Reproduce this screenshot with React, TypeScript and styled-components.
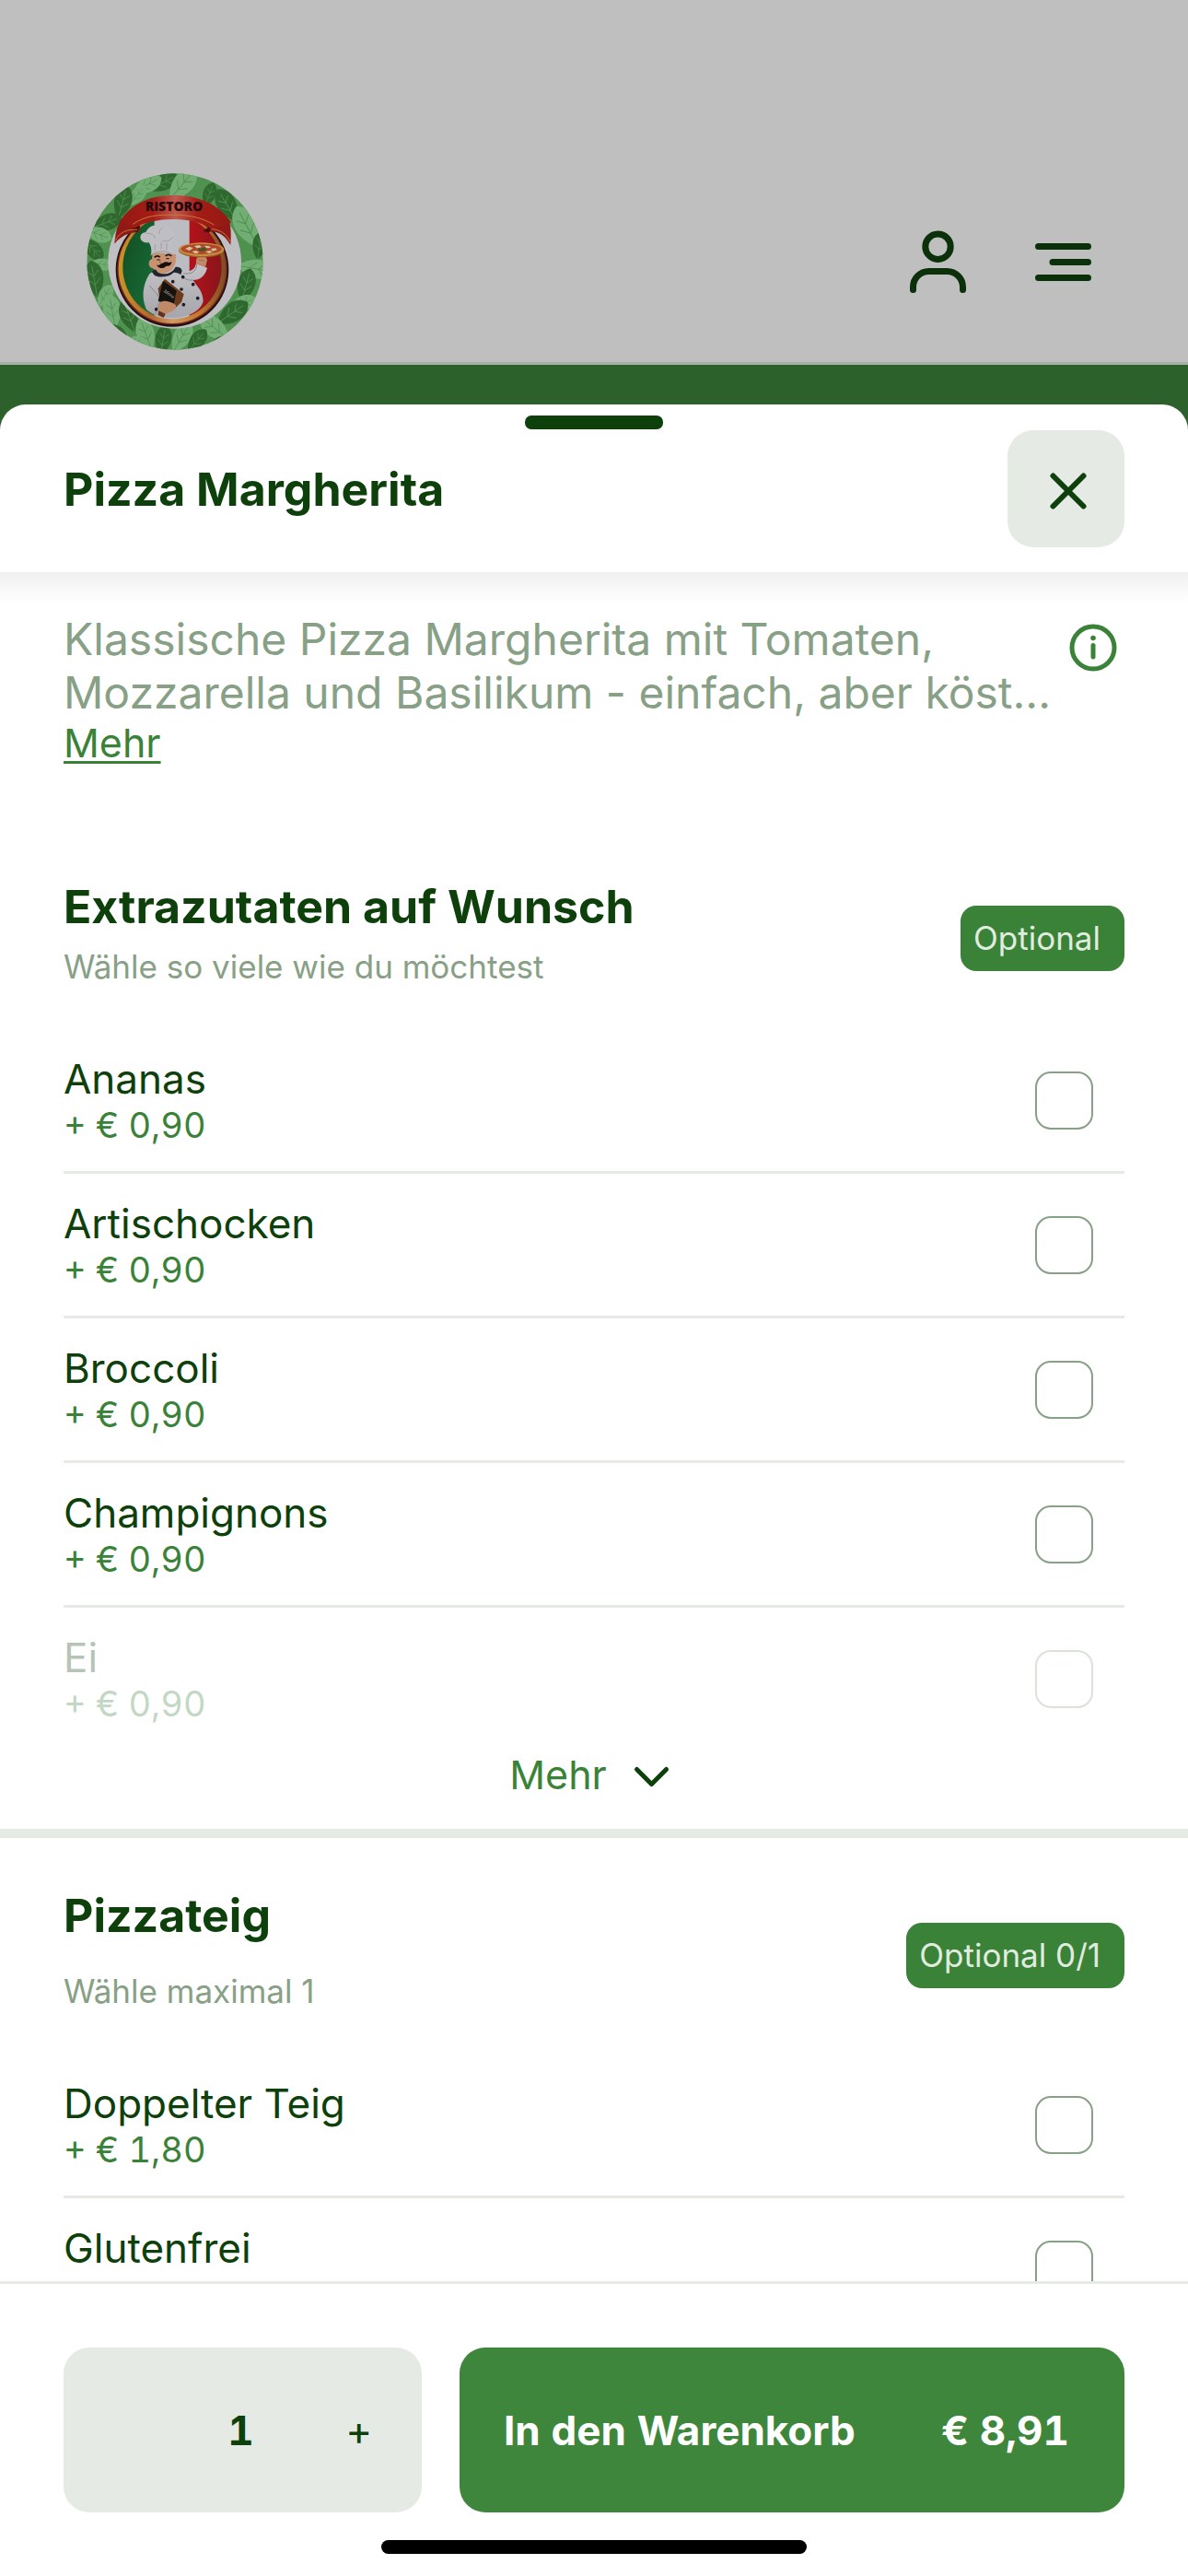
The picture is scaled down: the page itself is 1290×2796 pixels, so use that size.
import React, { useState } from "react";
import styled, { createGlobalStyle } from "styled-components";

const color = {
  ink: "#0d400b",
  green: "#3b8239",
  button: "#3e863c",
  muted: "#87a086",
  pale: "#e5ebe4",
};

const GlobalStyle = createGlobalStyle`
  *, *::before, *::after { box-sizing: border-box; }
  body {
    margin: 0;
    background: #ffffff;
    color: ${color.ink};
    font-family: Inter, "Liberation Sans", sans-serif;
  }
  button, input { font: inherit; color: inherit; }
  h1, h2, p, ul { margin: 0; padding: 0; }
`;

const Page = styled.div`
  display: flex;
  flex-direction: column;
  height: 100vh;
  background: #2c612b;
`;

const ShopHeader = styled.header`
  display: flex;
  align-items: center;
  justify-content: space-between;
  padding: 188px 100px 13px 94px;
  background: #bfbfbf;
  border-bottom: 3px solid #a9afa9;
`;

const HeaderActions = styled.nav`
  display: flex;
  gap: 64px;
`;

const IconButton = styled.button`
  display: flex;
  padding: 0;
  border: 0;
  background: none;
  color: #0a310a;
  cursor: pointer;
`;

const Sheet = styled.main`
  display: flex;
  flex: 1;
  flex-direction: column;
  min-height: 0;
  margin-top: 43px;
  border-radius: 28px 28px 0 0;
  background: #ffffff;
  overflow: hidden;
`;

const Handle = styled.div`
  align-self: center;
  flex: none;
  width: 150px;
  height: 15px;
  margin-top: 12px;
  border-radius: 7px;
  background: ${color.ink};
`;

const SheetHeader = styled.div`
  display: flex;
  align-items: center;
  justify-content: space-between;
  padding: 1px 69px 27px;
`;

const Title = styled.h1`
  font-size: 50px;
  line-height: 60px;
  font-weight: 700;
`;

const CloseButton = styled.button`
  display: flex;
  align-items: center;
  justify-content: center;
  width: 127px;
  height: 127px;
  padding: 0;
  border: 0;
  border-radius: 28px;
  background: ${color.pale};
  cursor: pointer;
`;

const ScrollArea = styled.div`
  flex: 1;
  min-height: 0;
  overflow-y: auto;
  scrollbar-width: none;
  background: linear-gradient(#f0f0f0, #ffffff 34px);
`;

const Intro = styled.section`
  display: flex;
  align-items: flex-start;
  justify-content: space-between;
  padding: 44px 69px 69px;
`;

const Description = styled.p`
  font-size: 48px;
  line-height: 58px;
  color: ${color.muted};
`;

const MoreLink = styled.a`
  display: inline-block;
  font-size: 43px;
  line-height: 50px;
  color: ${color.green};
  text-decoration: underline;
  text-decoration-thickness: 3px;
  text-underline-offset: 4px;
`;

const InfoButton = styled(IconButton)`
  flex: none;
  margin: 12px 8px 0 0;
  color: ${color.green};
`;

const Group = styled.section`
  padding-top: 54px;

  & + & {
    border-top: 10px solid ${color.pale};
  }
`;

const GroupHeader = styled.div`
  display: flex;
  align-items: center;
  justify-content: space-between;
  padding: 0 69px 34px;
`;

const GroupText = styled.div<{ $gap: number }>`
  display: flex;
  flex-direction: column;
  gap: ${(p) => p.$gap}px;
  padding-bottom: 10px;
`;

const GroupTitle = styled.h2`
  font-size: 50px;
  line-height: 60px;
  font-weight: 700;
`;

const GroupHint = styled.p`
  font-size: 35px;
  line-height: 48px;
  color: ${color.muted};
`;

const Badge = styled.span`
  padding: 11px 26px 12px 14px;
  border-radius: 17px;
  background: ${color.green};
  color: #e0ecdf;
  font-size: 35px;
  line-height: 48px;
`;

const OptionList = styled.ul`
  padding: 0 69px;
  list-style: none;
`;

const OptionItem = styled.li`
  & + & {
    border-top: 3px solid ${color.pale};
  }
`;

const OptionLabel = styled.label<{ $faded?: boolean }>`
  display: flex;
  align-items: center;
  justify-content: space-between;
  padding: 27px 34px 27px 0;
  opacity: ${(p) => (p.$faded ? 0.3 : 1)};
  cursor: pointer;
`;

const OptionText = styled.span`
  display: flex;
  flex-direction: column;
`;

const OptionName = styled.span`
  font-size: 44px;
  line-height: 54px;
`;

const OptionPrice = styled.span`
  font-size: 38px;
  line-height: 46px;
  font-variant-numeric: tabular-nums;
  color: ${color.green};
`;

const Checkbox = styled.input`
  appearance: none;
  width: 63px;
  height: 63px;
  margin: 0;
  border: 2px solid ${color.muted};
  border-radius: 17px;
  background: #ffffff;
  cursor: pointer;

  &:checked {
    background: ${color.green};
  }
`;

const ExpandButton = styled.button`
  display: flex;
  align-items: center;
  justify-content: center;
  gap: 24px;
  width: 100%;
  padding: 0 6px 32px 0;
  border: 0;
  background: none;
  color: ${color.green};
  font-size: 43px;
  line-height: 54px;
  cursor: pointer;
`;

const Footer = styled.footer`
  display: flex;
  flex: none;
  flex-direction: column;
  gap: 30px;
  padding: 69px 69px 24px;
  border-top: 3px solid ${color.pale};
  background: #ffffff;
`;

const Actions = styled.div`
  display: flex;
  gap: 41px;
  height: 179px;
`;

const Stepper = styled.div`
  display: grid;
  grid-template-columns: 1fr 1fr 1fr;
  align-items: center;
  width: 389px;
  padding-right: 4px;
  border-radius: 28px;
  background: ${color.pale};
  font-size: 44px;
  line-height: 54px;
  font-variant-numeric: tabular-nums;
  text-align: center;
`;

const StepButton = styled.button`
  height: 100%;
  padding: 0;
  border: 0;
  background: none;
  cursor: pointer;
`;

const Quantity = styled.output`
  font-weight: 700;
`;

const CartButton = styled.button`
  display: flex;
  flex: 1;
  align-items: center;
  justify-content: space-between;
  padding: 0 60px 0 48px;
  border: 0;
  border-radius: 28px;
  background: ${color.button};
  color: #ffffff;
  font-size: 44px;
  line-height: 54px;
  font-weight: 700;
  font-variant-numeric: tabular-nums;
  cursor: pointer;
`;

const HomeIndicator = styled.div`
  align-self: center;
  width: 462px;
  height: 15px;
  border-radius: 8px;
  background: #000000;
`;

const LEAF = "M0 -48C30 -34 34 8 0 46C-34 8 -30 -34 0 -48Z";
const VEIN = "M0 -34V46M0 -8L14 -22M0 -8L-14 -22M0 14L16 -2M0 14L-16 -2";

/* x, y, rotation, scale, shade */
const leaves: [number, number, number, number, "dark" | "light"][] = [
  [290, 85, 60, 1.1, "dark"], [238, 92, 62, 1.1, "light"], [352, 92, 40, 1.4, "light"],
  [440, 125, 20, 0.9, "dark"], [205, 128, 40, 0.9, "light"], [158, 150, 15, 1.2, "dark"],
  [500, 160, -30, 1.3, "dark"], [105, 215, 70, 1.1, "dark"], [78, 252, 110, 1.0, "light"],
  [565, 230, -28, 1.6, "light"], [62, 300, 140, 1.0, "dark"], [605, 290, 10, 1.0, "dark"],
  [90, 350, 100, 0.8, "light"], [66, 400, -10, 1.3, "dark"], [590, 365, 100, 1.3, "light"],
  [560, 420, 15, 1.2, "dark"], [100, 455, 30, 0.9, "light"], [125, 505, -10, 1.2, "light"],
  [548, 478, 70, 1.0, "light"], [180, 520, -20, 1.2, "dark"], [515, 510, 55, 1.3, "dark"],
  [130, 570, 120, 1.0, "dark"], [235, 580, -20, 1.2, "light"], [460, 560, -50, 1.3, "light"],
  [290, 600, 10, 1.1, "dark"], [350, 590, 30, 1.2, "light"], [400, 600, 40, 1.0, "dark"],
  [190, 612, 60, 0.9, "light"], [470, 612, 60, 0.9, "dark"],
];

const coatButtons = [[355, 392], [388, 416], [350, 432], [403, 461], [357, 482], [268, 497], [322, 407]];

function Logo() {
  return (
    <svg width="192" height="192" viewBox="42 54 574 576" role="img" aria-label="Ristoro">
      <defs>
        <clipPath id="disc"><circle cx="329" cy="342" r="287" /></clipPath>
        <clipPath id="oval"><ellipse cx="320" cy="360" rx="161" ry="169" /></clipPath>
        <linearGradient id="gold" x1="0" x2="1" y1="0" y2="0">
          <stop offset="0" stopColor="#c9952a" />
          <stop offset="0.3" stopColor="#b4672c" />
          <stop offset="0.5" stopColor="#d19a68" />
          <stop offset="0.75" stopColor="#c07a2c" />
          <stop offset="1" stopColor="#7d4a24" />
        </linearGradient>
        <linearGradient id="ribbon" x1="0" x2="1" y1="0" y2="0">
          <stop offset="0" stopColor="#931914" />
          <stop offset="0.3" stopColor="#a51c16" />
          <stop offset="0.5" stopColor="#bf5a4e" />
          <stop offset="0.7" stopColor="#a51c16" />
          <stop offset="1" stopColor="#931914" />
        </linearGradient>
        <linearGradient id="flagGreen" x1="0" x2="1" y1="0" y2="1">
          <stop offset="0" stopColor="#12491f" />
          <stop offset="1" stopColor="#18713a" />
        </linearGradient>
        <linearGradient id="flagRed" x1="0" x2="1" y1="0" y2="0">
          <stop offset="0" stopColor="#b5121b" />
          <stop offset="1" stopColor="#80161a" />
        </linearGradient>
        <linearGradient id="coat" x1="0" x2="0" y1="0" y2="1">
          <stop offset="0" stopColor="#c4c4c8" />
          <stop offset="1" stopColor="#a5a5ab" />
        </linearGradient>
      </defs>
      <g clipPath="url(#disc)">
        <rect x="42" y="54" width="574" height="576" fill="#4f924f" />
        {leaves.map(([x, y, r, s, shade], i) => (
          <g key={i} transform={`translate(${x} ${y}) rotate(${r}) scale(${s})`}>
            <path d={LEAF} fill={shade === "dark" ? "#30692f" : "#72ae73"} />
            <path d={VEIN} fill="none" stroke="#4f924f" strokeWidth="2" />
          </g>
        ))}
      </g>
      <circle cx="328" cy="343" r="217" fill="#c0c0c4" />
      <ellipse cx="320" cy="368" rx="184" ry="186" fill="#231013" />
      <ellipse cx="320" cy="367" rx="179" ry="180" fill="#7c2a1d" />
      <ellipse cx="320" cy="365" rx="175" ry="178" fill="url(#gold)" />
      <g clipPath="url(#oval)">
        <rect x="150" y="180" width="113" height="360" fill="url(#flagGreen)" />
        <rect x="262" y="180" width="115" height="360" fill="#bcbdc3" />
        <rect x="376" y="180" width="120" height="360" fill="url(#flagRed)" />
      </g>

      {/* coat and raised arm */}
      <path d="M246 382C222 420 220 462 236 498C262 522 300 526 330 524C375 522 415 500 421 470C420 436 398 420 388 402C410 402 428 388 434 362L398 348C394 366 384 374 352 376L344 366C310 396 276 388 264 370Z" fill="url(#coat)" />
      <path d="M388 402C370 404 360 398 352 386M246 420C262 440 280 450 282 480M400 352C398 376 380 384 356 380" fill="none" stroke="#85858c" strokeWidth="3" />
      <path d="M284 450C276 480 270 500 262 520" fill="none" stroke="#8d8d94" strokeWidth="3" />
      <path d="M398 348C396 334 402 324 412 324C426 322 438 330 432 344L428 360Z" fill="#c08a68" />
      <path d="M406 336L424 340" stroke="#8e5a3d" strokeWidth="2" />
      {coatButtons.map(([x, y]) => (
        <circle key={`${x}-${y}`} cx={x} cy={y} r="5.5" fill="#1c1c22" />
      ))}

      {/* menu folder and hand */}
      <path d="M296 398L346 438L358 448L350 474L322 500L280 470L274 430Z" fill="#6b3b1c" />
      <path d="M290 404L334 436L324 486L274 470Z" fill="#15130f" />
      <text x="291" y="440" fontFamily="Liberation Serif, serif" fontSize="17" fontStyle="italic" fill="#a8a8a0" transform="rotate(35 291 440)">Menu</text>
      <path d="M278 476C296 464 320 474 332 484C334 500 316 506 298 512L290 524C276 520 270 508 274 494Z" fill="#c08a68" />
      <path d="M276 502L298 512L292 524L274 516Z" fill="#5d3220" />

      {/* head */}
      <path d="M254 334C240 336 240 364 258 364C262 376 278 382 296 380C320 376 336 352 332 318L256 312Z" fill="#c79272" />
      <path d="M262 328C268 322 276 322 280 328M298 324C304 318 312 318 318 324" fill="none" stroke="#1d1210" strokeWidth="5" />
      <path d="M270 336L280 336M300 332L310 332" stroke="#1d1210" strokeWidth="3" />
      <path d="M282 338C276 350 288 352 294 346" fill="none" stroke="#9a5c40" strokeWidth="3" />
      <path d="M270 352C278 358 284 346 292 346C300 338 308 350 318 342C318 354 308 358 300 356C294 366 272 366 270 352Z" fill="#140e0d" />
      <path d="M254 376C262 362 268 368 272 376C292 388 320 382 330 360C340 358 350 362 352 372L348 384C336 378 328 376 324 378C310 394 272 394 262 386Z" fill="#22262c" />

      {/* hat */}
      <path d="M244 280C210 284 208 248 234 246C246 218 280 218 290 230C320 222 334 246 326 264C324 272 318 280 318 284L322 318C300 304 270 308 250 322C254 306 252 292 244 280Z" fill="#bfbfc3" />
      <path d="M232 250C250 248 262 254 264 266M288 232C280 236 276 244 278 252M322 262C310 276 300 278 288 274M250 322C270 304 300 306 322 318M264 286V306M284 280V302M302 282V304" fill="none" stroke="#96969c" strokeWidth="2.5" />

      {/* pizza */}
      <ellipse cx="415" cy="306" rx="74" ry="22" fill="#9a5f26" />
      <ellipse cx="415" cy="302" rx="74" ry="22" fill="#c98d42" />
      <ellipse cx="415" cy="301" rx="66" ry="17" fill="#b0472a" />
      <path d="M362 300l14-7 12 5-12 8zM392 291l16-3 8 6-14 5zM424 290l16 1 6 6-14 1zM446 300l16-2 4 6-14 4zM384 309l14-3 10 6-12 4zM428 310l14-4 10 4-12 5z" fill="#d3c69e" />
      <path d="M402 297l12 3 12-5 6 6-10 8-14-2z" fill="#3a5b23" />

      {/* ribbon */}
      <path d="M150 212L216 226L212 246C180 246 152 258 132 284C134 256 138 232 150 212Z" fill="#8f1a15" />
      <path d="M506 212L438 226L440 246C466 240 492 256 510 288C512 256 512 232 506 212Z" fill="#8f1a15" />
      <path d="M184 216L216 228L206 246L192 240Z" fill="#4a0f0d" />
      <path d="M450 222L420 242L440 248Z" fill="#4a0f0d" />
      <path d="M148 212C190 150 250 126 326 126C408 126 472 156 512 214L452 240C424 214 372 204 326 204C276 204 222 214 196 234Z" fill="url(#ribbon)" />
      <path d="M192 220C230 192 280 188 326 190C378 190 420 200 456 222" fill="none" stroke="#c87a3a" strokeWidth="3" />
      <path d="M136 272C148 246 172 236 206 238M508 276C496 250 476 238 448 236" fill="none" stroke="#c87a3a" strokeWidth="3" />
      <text x="326" y="178" textAnchor="middle" fontFamily="Open Sans, Noto Sans, sans-serif" fontWeight="800" fontSize="42" fill="#200607">RISTORO</text>
    </svg>
  );
}

function UserIcon() {
  return (
    <svg width="72" height="72" viewBox="0 0 72 72" fill="none" stroke="currentColor" strokeWidth="7" strokeLinecap="round" aria-hidden="true">
      <circle cx="36.5" cy="19.7" r="13.7" />
      <path d="M9.5 66.5V63.5A17 17 0 0 1 26.5 46.5H46.5A17 17 0 0 1 63.5 63.5V66.5" />
    </svg>
  );
}

function MenuIcon() {
  return (
    <svg width="72" height="72" viewBox="0 0 72 72" fill="none" stroke="currentColor" strokeWidth="7" strokeLinecap="round" aria-hidden="true">
      <path d="M9.5 19.5H63.5M25 36.5H63.5M9.5 53.5H63.5" />
    </svg>
  );
}

function CloseIcon() {
  return (
    <svg width="72" height="72" viewBox="0 0 72 72" fill="none" stroke={color.ink} strokeWidth="6" strokeLinecap="round" aria-hidden="true">
      <path d="M21.5 21.5L54.5 54.5M54.5 21.5L21.5 54.5" />
    </svg>
  );
}

function InfoIcon() {
  return (
    <svg width="52" height="52" viewBox="0 0 52 52" fill="none" stroke="currentColor" strokeWidth="5" strokeLinecap="round" aria-hidden="true">
      <circle cx="26" cy="26" r="23" />
      <path d="M26 23.5V36" />
      <circle cx="26" cy="15.5" r="2.8" fill="currentColor" stroke="none" />
    </svg>
  );
}

function ChevronIcon() {
  return (
    <svg width="48" height="48" viewBox="0 0 48 48" fill="none" stroke={color.ink} strokeWidth="5" strokeLinecap="round" strokeLinejoin="round" aria-hidden="true">
      <path d="M8.5 18.5L24.5 34.5L40.5 18.5" />
    </svg>
  );
}

type Option = { name: string; price: string; faded?: boolean };

const extras: Option[] = [
  { name: "Ananas", price: "0,90" },
  { name: "Artischocken", price: "0,90" },
  { name: "Broccoli", price: "0,90" },
  { name: "Champignons", price: "0,90" },
  { name: "Ei", price: "0,90", faded: true },
];

const doughs: Option[] = [
  { name: "Doppelter Teig", price: "1,80" },
  { name: "Glutenfrei", price: "2,70" },
];

type OptionGroupProps = {
  title: string;
  hint: string;
  badge: string;
  gap: number;
  options: Option[];
  children?: React.ReactNode;
};

function OptionRow({ option }: { option: Option }) {
  const id = `option-${option.name.toLowerCase().replace(/\s+/g, "-")}`;
  return (
    <OptionItem>
      <OptionLabel htmlFor={id} $faded={option.faded}>
        <OptionText>
          <OptionName>{option.name}</OptionName>
          <OptionPrice>+ € {option.price}</OptionPrice>
        </OptionText>
        <Checkbox type="checkbox" id={id} />
      </OptionLabel>
    </OptionItem>
  );
}

function OptionGroup({ title, hint, badge, gap, options, children }: OptionGroupProps) {
  return (
    <Group>
      <GroupHeader>
        <GroupText $gap={gap}>
          <GroupTitle>{title}</GroupTitle>
          <GroupHint>{hint}</GroupHint>
        </GroupText>
        <Badge>{badge}</Badge>
      </GroupHeader>
      <OptionList>
        {options.map((o) => (
          <OptionRow key={o.name} option={o} />
        ))}
      </OptionList>
      {children}
    </Group>
  );
}

export default function App() {
  const [count, setCount] = useState(1);
  const total = (count * 8.91).toFixed(2).replace(".", ",");

  return (
    <>
      <GlobalStyle />
      <Page>
        <ShopHeader>
          <Logo />
          <HeaderActions>
            <IconButton type="button" aria-label="Konto"><UserIcon /></IconButton>
            <IconButton type="button" aria-label="Menü"><MenuIcon /></IconButton>
          </HeaderActions>
        </ShopHeader>

        <Sheet>
          <Handle />
          <SheetHeader>
            <Title>Pizza Margherita</Title>
            <CloseButton type="button" aria-label="Schließen"><CloseIcon /></CloseButton>
          </SheetHeader>

          <ScrollArea>
            <Intro>
              <div>
                <Description>
                  Klassische Pizza Margherita mit Tomaten, Mozzarella und Basilikum - einfach, aber köst...
                </Description>
                <MoreLink href="#mehr">Mehr</MoreLink>
              </div>
              <InfoButton type="button" aria-label="Produktinformationen"><InfoIcon /></InfoButton>
            </Intro>

            <OptionGroup
              title="Extrazutaten auf Wunsch"
              hint="Wähle so viele wie du möchtest"
              badge="Optional"
              gap={11}
              options={extras}
            >
              <ExpandButton type="button">
                Mehr
                <ChevronIcon />
              </ExpandButton>
            </OptionGroup>

            <OptionGroup
              title="Pizzateig"
              hint="Wähle maximal 1"
              badge="Optional 0/1"
              gap={28}
              options={doughs}
            />
          </ScrollArea>

          <Footer>
            <Actions>
              <Stepper>
                <StepButton type="button" aria-label="Weniger" disabled={count === 1} onClick={() => setCount(count - 1)}>
                  {count > 1 ? "-" : ""}
                </StepButton>
                <Quantity>{count}</Quantity>
                <StepButton type="button" aria-label="Mehr" onClick={() => setCount(count + 1)}>+</StepButton>
              </Stepper>
              <CartButton type="button">
                <span>In den Warenkorb</span>
                <span>€ {total}</span>
              </CartButton>
            </Actions>
            <HomeIndicator />
          </Footer>
        </Sheet>
      </Page>
    </>
  );
}
